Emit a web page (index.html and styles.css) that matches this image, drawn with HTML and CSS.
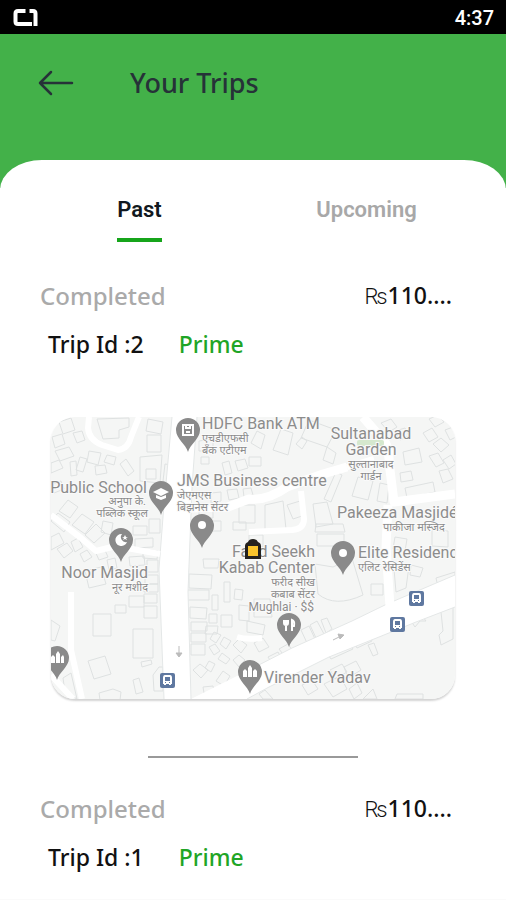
FILE: index.html
```html
<!DOCTYPE html>
<html lang="en">
<head>
  <meta charset="UTF-8">
  <meta name="viewport" content="width=device-width, initial-scale=1">
  <title>Your Trips</title>
  <link rel="stylesheet" href="styles.css">
</head>
<body>

<div class="statusbar">
  <svg class="statusbar-icon" viewBox="0 0 26 20" aria-hidden="true">
    <path d="M13.500 3H6Q3.500 3 3.500 5.500V13.500Q3.500 16 6 16H20"/>
    <path d="M17.500 3H21Q23.500 3 23.500 5.500V18"/>
  </svg>
  <span>4:37</span>
</div>

<header class="header">
  <button class="back" type="button" aria-label="Back">
    <svg viewBox="0 0 36 26" aria-hidden="true"><path d="M13 2L2 13l11 11M2 13h32"/></svg>
  </button>
  <h1>Your Trips</h1>
</header>

<main class="sheet">
  <nav class="tabs">
    <a class="tab active" href="#past">Past</a>
    <a class="tab" href="#upcoming">Upcoming</a>
  </nav>

  <section class="trip">
    <div class="trip-row">
      <span class="status">Completed</span>
      <span class="price"><span class="rupee">₨</span>110....</span>
    </div>
    <div class="trip-row trip-info">
      <span class="trip-id">Trip Id :2</span>
      <span class="trip-type">Prime</span>
    </div>

    <svg class="map" viewBox="0 0 404 282" role="img" aria-label="Trip map">
      <defs>
        <g id="pin">
          <path class="pin" d="M0 22C-2 14-12 9-12 0A12 12 0 0 1 12 0C12 9 2 14 0 22z"/>
        </g>
        <g id="bus">
          <rect class="bus" x="-8" y="-7" width="15" height="15" rx="2"/>
          <path fill="#fff" d="M-5-2q0-3 2-3h5q2 0 2 3v6h-1v1h-2v-1h-3v1h-2v-1h-1z"/>
          <path fill="#5f78a0" d="M-3-3h5v4h-5zM-3 2h1v1h-1zM1 2h1v1h-1z"/>
        </g>
      </defs>
      <rect width="404" height="282" fill="#f5f6f5"/>

      <!-- buildings -->
      <path class="buildings" d="M8 5l12-4 4 12-12 4zM1 20l10-3 3 10-10 4zM4 34l14-4 5 9-14 5zM0 46l8-3 4 8-12 5zM22 16l9-2 3 9-8 3zM46 2l32-1 0 9-10 3 0 8-16 1zM19 45l6-1 1 14-6 1zM29 40l7 2-4 13-7-2zM38 34l12 2-3 12-11-3zM69 47l6-5 8 12-6 5zM44 49l10-1 2 8-11 2zM56 38l9 2-2 8-10-3z
      M97 2l15 3-2 12-15-3zM96 18l14 0 0 17-14 0zM89 40l22-2-2 28-20-2zM114 47l7 1-4 18-5-2zM95 52l10 0 0 10-10 0zM0 68l10-4 3 8-10 4zM8 94l9-11 10 7-8 11zM0 104l7-8 12 9-6 10zM21 108l10-11 12 8-9 12zM34 118l11-11 9 9-11 10zM52 104l10 2-2 12-10-3zM0 120l8-4 5 10-13 7zM6 132l10-6 6 8-9 7zM20 125l7-4 5 9-8 5zM29 137l7-4 5 7-8 5zM44 134l9-3 4 9-9 3zM82 109l14 0 0 9-14 0zM84 122l18-1 0 9-18 1zM98 102l11 0 0 14-11 0zM92 132l15 2-1 8-14-1z
      M0 7l5-4M34 154l16-4 5 17-17 4zM56 143l8-2 2 10-8 2zM78 140l15-1 1 9-15 1zM96 143l11 0 0 12-11 0zM94 158l13 0 0 9-13 0zM93 167l14 0 0 8-14 0zM78 179l15 0 0 11-15 0zM64 188l11 0 0 8-11 0zM93 177l13 0 0 9-13 0zM93 189l13 0 0 12-13 0zM42 197l18 0 0 22-18 0zM82 212l20 0 0 29-20 0zM37 244l17-5 6 18-17 5zM90 245l10-2 1 4-10 3zM82 263l6-2 4 14-7 2zM48 276l14-4 8 3-1 8-20 0zM102 258l6-8 4 0 0 24-9 0zM0 203l9 6-5 15-4-1zM20 256l-8 5 2 14 12 7z
      M148 24l14-2 0 12-14 0zM150 40l8 0 0 7-8 0zM171 46l7-2 3 12-7 2zM184 44l10-2 3 9-10 3zM198 40l12 0 0 9-12 0zM200 26l6-12 8 4-4 14zM222 33l8-21 12 4-5 22zM258 3l27 10-9 17-26-9zM245 27l6-7 5 4-5 8zM276 30l9 6-3 11-10-4zM176 73l10-1 2 9-10 2zM192 72l8-1 2 7-9 2zM160 76l10-1 0 9-10 2zM188 88l16 0 0 18-16 0zM182 105l13 0 0 8-13 0zM148 92l14 0 0 9-14 0zM160 104l10 0 0 10-10 0zM198 118l14 0 0 12-14 0zM214 88l18-4 3 28-21 1zM236 88l13-4 2 15-9 3zM285 55l6 3-11 27-7-3zM307 60l15 4-5 19-16-4zM329 66l9 2-2 18-10-2zM262 87l14-2 6 22-17 3zM265 107l27 0 2 8-30 0zM266 117l27 0 0 12-27 0zM352 35l16-4 3 14-17 3zM349 56l11-2 2 9-12 2zM354 71l28-6 2 10-28 6zM378 2l9-4 6 7-9 5zM372 16l9-5 6 9-9 5zM382 27l8-6 8 7-8 7zM378 39l9-3 6 10-8 4zM392 43l8-5 5 9-7 5zM394 13l8-3 5 9-8 4zM388 54l9-2 5 10-10 4zM381 113l16 1 0 16-16-1zM344 120l12 2-2 12-12-2zM330 6l10-4 6 8-8 5zM344 14l10-3 4 8-9 4z
      M138 157l23 1-1 14-22-1zM136 173l22 0 0 10-22 0zM139 190l17 1-1 11-16-1zM140 205l16 0 0 9-16 0zM140 216l15 0 0 9-15 0zM140 227l14 0 0 11-14 0zM161 178l6 0 0 15-6 0zM173 165l6 0 0 20-6 0zM184 172l8 1-1 10-8-1zM170 198l11 0 0 12-11 0zM158 197l8 0 0 9-8 0zM155 209l12 0-1 8-12 0zM152 142l16 0-1 9-14 0zM188 188l10 1 0 15-10-1zM163 215l7 3-5 8-6-4zM173 220l7 4-5 8-6-5zM182 228l6-6 8 6-6 8zM158 230l6-3 5 7-6 4zM171 236l8 6-4 5-8-5zM142 253l7-6 8 6-7 8zM152 270l10-1 1 6-10 1zM165 264l7-10 7 5-6 10zM158 244l6 3-4 8-6-4zM182 243l6-5 6 5-6 7z
      M203 226l9-5 6 9-10 5zM217 240l10-5 6 11-9 5zM228 232l9-5 6 9-8 5zM196 204l18 4-2 10-16-3zM203 182l16 0 2 18-18 0zM250 213l8-4 6 13-8 4zM259 208l7-4 7 13-8 4zM270 203l6-2 5 11-6 4zM320 167l12 0 0 11-12 0zM282 150l-18-3 3 30q17 14 45 1l-11-37zM278 239l22-10 2 3-22 10zM304 227l15-7 2 4-15 7zM317 228l6-2 4 11-5 2zM360 204l12-4 3 4-6 0-5 6zM385 161l19-6 0 10-17 5zM390 195l12-6 0 33-12 6-2-10 4-4zM279 253l12-6 5 8-12 7zM273 267l16-8 7 13-14 8zM293 250l12-6 5 9-13 8zM251 268l10-5 6 9-10 6zM208 277l6-4 8 9-10 0zM322 272l4 10-14 0zM346 277l26 0 0 5-28 0zM298 272l8-6 5 10-8 6zM343 152l15-3-3 22-10 4zM360 148l12 3-3 9-10-2z"/>

      <!-- roads -->
      <path class="road" d="M121 0h25l-5 70-3 75-1 30 3 107h-27l-5-130 4-52zM404 158l-68 29-35 17-60 27-41 21-60 30h56l22-12 60-30 50-20 37-15 39-15z"/>
      <path class="road-edge" d="M121 0l-9 100-4 52 5 130M146 0l-5 70-4 105 3 107M404 158l-68 29-35 17-60 27-41 21M196 282l22-12 60-30 50-20 37-15 39-15"/>
      <path class="lane wide" d="M137 91l40-1 21-8q18 2 38-12l36-13 24-7M312 0l13 15q14 10 13 30l5 40 61-8M337 88l-2 42 4 60"/>
      <path class="lane" d="M250 74l3 28q0 10-12 11l-43 2M38 0l-1 11q1 12 14 17l16 5q10-1 13-13L88 0M0 98l30 23 15 13 20-5 44 8M20 175l0 58 11 49M0 258l22 24M186 220q10 3 25 1M296 50l27-8"/>
      <rect x="306" y="23" width="27" height="6" rx="2" fill="#d5e8ce"/>
      <g class="arrows">
        <path d="M128 229v10M125 236l3 4 3-4zM282 223l8-4M287 217l6 1-4 4z"/>
      </g>

      <!-- places -->
      <g class="labels">
        <text x="151" y="12">HDFC Bank ATM</text>
        <text class="hi" x="151" y="25">एचडीएफसी</text>
        <text class="hi" x="151" y="37">बँक एटीएम</text>
        <text class="mid" x="320" y="22">Sultanabad</text>
        <text class="mid" x="320" y="38">Garden</text>
        <text class="mid hi" x="320" y="51">सुल्तानाबाद</text>
        <text class="mid hi" x="320" y="63">गार्डन</text>
        <text class="end" x="96" y="76">Public School</text>
        <text class="end hi" x="95" y="88">अनुपा के.</text>
        <text class="end hi" x="97" y="100">पब्लिक स्कूल</text>
        <text x="126" y="69">JMS Business centre</text>
        <text class="hi" x="126" y="82">जेएमएस</text>
        <text class="hi" x="126" y="94">बिझनेस सेंटर</text>
        <text x="286" y="101">Pakeeza Masjidé</text>
        <text class="hi" x="332" y="114">पाकीजा मस्जिद</text>
        <text class="end" x="264" y="140">Farid Seekh</text>
        <text class="end" x="264" y="156">Kabab Center</text>
        <text class="end hi" x="264" y="169">फरीद सीख</text>
        <text class="end hi" x="264" y="181">कबाब सेंटर</text>
        <text class="end small" x="263" y="194">Mughlai · $$</text>
        <text x="307" y="141">Elite Residenc</text>
        <text class="hi" x="307" y="154">एलिट रेसिडेंस</text>
        <text class="end" x="97" y="161">Noor Masjid</text>
        <text class="end hi" x="97" y="174">नूर मशीद</text>
        <text x="213" y="266">Virender Yadav</text>
      </g>

      <use href="#pin" x="137" y="13"/>
      <path class="mark-line" d="M132 8h10v10h-10zM135 8v3h4v-3M135 15h4"/>
      <use href="#pin" x="110" y="76"/>
      <path class="mark" d="M102 75l8-4 8 4-8 4zM105 78l5 2 5-2v3l-5 2-5-2z"/>
      <use href="#pin" x="151" y="109"/>
      <circle class="mark" cx="151" cy="108" r="4"/>
      <use href="#pin" x="70" y="123"/>
      <path class="mark" d="M71 117a6 6 0 1 0 5 8a5 5 0 0 1-5-8zM74 118l1 2h2l-2 1 1 2-2-1-2 1 1-2-2-1h2z"/>
      <use href="#pin" x="292" y="136"/>
      <circle class="mark" cx="292" cy="136" r="4"/>
      <use href="#pin" x="238" y="208"/>
      <path class="mark-line" d="M233 203v3q0 2 2 2t2-2v-3M235 203v11M241 214v-11q3 1 2 6h-2"/>
      <use href="#pin" x="199" y="255"/>
      <path class="mark" d="M192 260v-6l2-2 2 2v6zM197 260v-9l2-3 2 3v9zM202 260v-6l2-2 2 2v6z"/>
      <use href="#pin" x="6" y="241"/>
      <path class="mark" d="M0 246v-6l2-2 2 2v6zM5 246v-9l2-3 2 3v9zM10 246v-6l2-2 1 2v6z"/>

      <use href="#bus" x="117" y="263"/>
      <use href="#bus" x="366" y="181"/>
      <use href="#bus" x="347" y="207"/>

      <!-- vehicle -->
      <path fill="#25221f" d="M194 129q0-3 3-4 1-3 5-3t5 3q3 1 3 4v13h-16z"/>
      <rect x="197" y="129" width="10" height="10" fill="#fbc52d"/>
    </svg>
  </section>

  <hr class="divider">

  <section class="trip">
    <div class="trip-row">
      <span class="status">Completed</span>
      <span class="price"><span class="rupee">₨</span>110....</span>
    </div>
    <div class="trip-row trip-info">
      <span class="trip-id">Trip Id :1</span>
      <span class="trip-type">Prime</span>
    </div>
  </section>
</main>

</body>
</html>
```

FILE: styles.css
```css
* {
  box-sizing: border-box;
}
body {
  margin: 0;
  background: #fafafa;
  font-family: "Noto Sans", sans-serif;
  color: #111;
}
.statusbar {
  display: flex;
  justify-content: space-between;
  align-items: center;
  height: 34px;
  padding: 2px 12px 0;
  background: #000;
  color: #fff;
  font: 500 20px Roboto, sans-serif;
}
.statusbar-icon {
  width: 26px;
  height: 20px;
  fill: none;
  stroke: #fff;
  stroke-width: 4;
}
.header {
  display: flex;
  align-items: flex-start;
  gap: 56px;
  height: 154px;
  padding: 31px 38px;
  background: #43b149;
  color: #263238;
}
.header h1 {
  margin: 0;
  font-size: 27px;
  font-weight: 500;
  line-height: 36px;
}
.back {
  display: flex;
  align-items: center;
  height: 36px;
  padding: 0;
  border: none;
  background: none;
  cursor: pointer;
}
.back svg {
  width: 36px;
  height: 26px;
  fill: none;
  stroke: #263238;
  stroke-width: 2.5;
  stroke-linecap: round;
  stroke-linejoin: round;
}
.sheet {
  margin: -28px 0 2px;
  padding: 35px 40px 24px;
  border-radius: 42px 42px 0 0 / 30px 30px 0 0;
  background: #fff;
}
.tabs {
  display: grid;
  grid-template-columns: 1fr 1fr;
  justify-items: center;
  margin: 0 -14px 35px;
}
.tab {
  padding-bottom: 13px;
  border-bottom: 4px solid transparent;
  color: #a8a8a8;
  font: 600 22px/30px Roboto, sans-serif;
  text-decoration: none;
}
.tab.active {
  border-color: #16a51b;
  color: #111820;
}
.trip-row {
  display: flex;
  justify-content: space-between;
  align-items: center;
  font-size: 23px;
  font-weight: 500;
  line-height: 36px;
}
.status {
  color: #aaa;
  font-size: 24px;
}
.price {
  padding-right: 14px;
}
.rupee {
  font-family: Roboto, sans-serif;
  font-size: 22px;
  font-weight: 300;
}
.trip-info {
  justify-content: flex-start;
  gap: 35px;
  margin-top: 11px;
  padding-left: 8px;
}
.trip-type {
  color: #1fa526;
}
.map {
  display: block;
  width: calc(100% - 22px);
  margin: 55px 11px 0;
  border-radius: 24px;
  box-shadow: 0 2px 2px #d4d4d4;
}
.buildings {
  fill: none;
  stroke: #dee1e1;
}
.road {
  fill: #fff;
}
.road-edge {
  fill: none;
  stroke: #e4e7e7;
}
.lane {
  fill: none;
  stroke: #fff;
  stroke-width: 6;
  stroke-linejoin: round;
}
.lane.wide {
  stroke-width: 9;
}
.arrows {
  fill: #bbb;
  stroke: #bbb;
}
.labels {
  fill: #8c8c8c;
  font: 16px Roboto, "Noto Sans", sans-serif;
  paint-order: stroke;
  stroke: #fafafa;
  stroke-width: 2;
}
.labels .hi {
  font-size: 11px;
}
.labels .small {
  font-size: 12px;
}
.labels .mid {
  text-anchor: middle;
}
.labels .end {
  text-anchor: end;
}
.pin {
  fill: #8a8a8a;
}
.mark {
  fill: #fff;
}
.mark-line {
  fill: none;
  stroke: #fff;
  stroke-width: 2;
}
.bus {
  fill: #5f78a0;
}
.divider {
  width: 210px;
  height: 2px;
  margin: 57px auto 32px;
  border: none;
  background: #999;
}
```
